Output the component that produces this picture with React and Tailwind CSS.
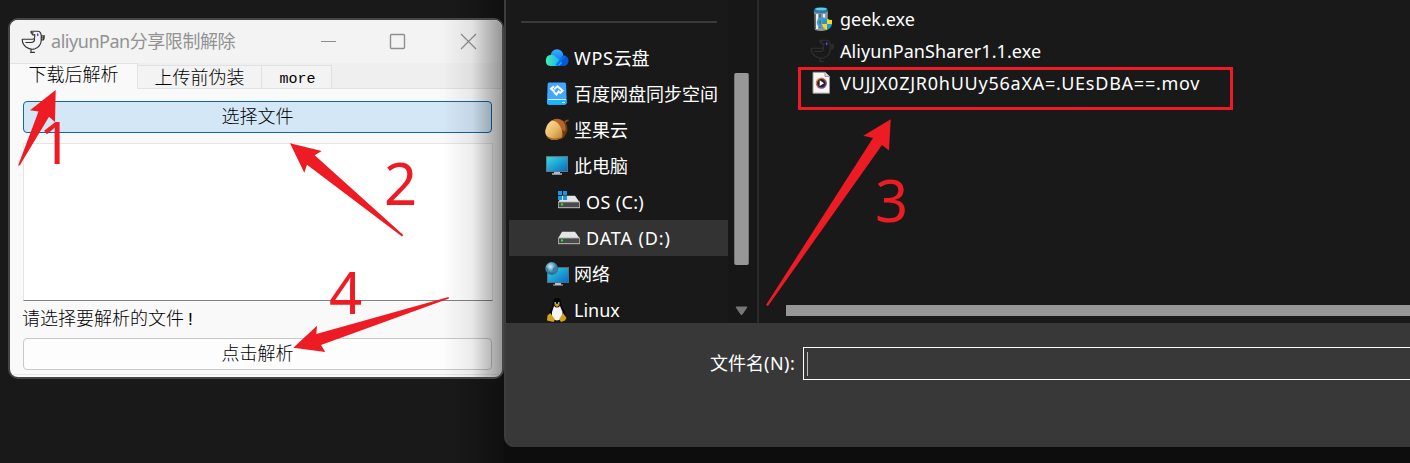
import React from "react";

const ui = "font-['Noto_Sans','Noto_Sans_CJK_SC',sans-serif]";
const song = "font-['Liberation_Mono','Noto_Sans_CJK_SC',monospace] font-light";

function Bird({ stroke, width = 24, height = 24 }) {
  return (
    <svg width={width} height={height} viewBox="0 0 24 24" fill="none" stroke={stroke} strokeWidth="1.15" strokeLinejoin="round" strokeLinecap="round">
      <path d="M13.7 4.6V7.2Q13.5 9.2 11.5 9.2H1.2Q1.2 14 5 17Q9.5 20.3 14 18.8Q20 16.2 20.2 10.5V5.5Q20 1.3 16.5 1.2H10V2.8H12.2M10.5 2.8L11.5 4.8H14M4.8 12.5H10Q13.6 12.2 13.6 9M20.3 5.8H23.5L22.5 7.8H20.5M20.5 9.8H22.5L23.3 7.8M10 19.5V22.3M9.5 22.3H13.5" />
      <path d="M16.7 4V5.4" stroke="#7041f0" strokeWidth="1.6" />
    </svg>
  );
}

function Cloud() {
  return (
    <svg width="24" height="24" viewBox="0 0 24 24">
      <defs>
        <linearGradient id="wa"><stop stopColor="#42efae" /><stop offset="1" stopColor="#14a8fa" /></linearGradient>
        <linearGradient id="wb" x2="0" y2="1"><stop stopColor="#41adff" /><stop offset="1" stopColor="#0878f4" /></linearGradient>
      </defs>
      <circle cx="12" cy="9.5" r="6.2" fill="url(#wb)" />
      <path d="M11 20L18 9.2Q23.5 9.8 23.5 14.7Q23.2 20 18 20Z" fill="#0757d9" />
      <path d="M6.3 8.7Q9.2 8.7 12.3 12L17.2 16.7Q15 20 11 20H6Q.8 20 .8 14.5Q1 9 6.3 8.7Z" fill="url(#wa)" />
      <path d="M10.6 18.8L17 11.1Q19 9.2 21 9.8L12.7 19.7Z" fill="#0872ee" />
    </svg>
  );
}

function Baidu() {
  return (
    <svg width="24" height="24" viewBox="0 0 24 24">
      <path d="M4 .5H19.5Q21 .5 21.1 2.5L21.7 20Q21.5 22.8 19.5 22.8H4Q2 22.8 2 20.5L2.6 2.5Q2.7 .5 4 .5Z" fill="#42a5ff" />
      <path d="M2 17.5H21.7V21Q21.5 22.8 19.5 22.8H4Q2 22.8 2 20.5Z" fill="#1db4fc" />
      <path d="M3 17.5H21" stroke="#d9f2ff" strokeWidth="1" />
      <path d="M17 20.5H20" stroke="white" strokeWidth="1" />
      <path d="M9.6 9.8L6 6.8L9 4.2M9.2 7.2L12.5 4.3L15 6.4M14 5.5L17.6 8.8L14.5 11.4M14.2 8.6L11.5 12.4L8.8 10" fill="none" stroke="white" strokeWidth="2" />
    </svg>
  );
}

function Acorn() {
  return (
    <svg width="24" height="24" viewBox="0 0 24 24">
      <defs><linearGradient id="nut" x2="1" y2="1"><stop stopColor="#ffe0a0" /><stop offset=".55" stopColor="#e8b865" /><stop offset="1" stopColor="#b87829" /></linearGradient></defs>
      <path d="M18.5 5Q19.5 1.5 23.5 1.5V3.2Q20.5 3.4 20.5 6" fill="#984819" />
      <path d="M6 3.5Q11-1.2 17 2.1Q23.5 6 22.3 13Q20 20 15 21.5Z" fill="#713813" />
      <path d="M8 1.8Q13-1 18.5 3.5Q21.5 8 20 13.5Q13 10 8 1.8" fill="#b46529" />
      <path d="M7 2.2Q12 3 15 8Q18.5 13 17 19.5Q10 24 4 20.5Q-1.2 16 .7 11Q2 5.2 7 2.2Z" fill="url(#nut)" />
      <path d="M1 17Q6 22.3 17.2 19.3Q9 24.5 3 20Z" fill="#a96722" />
    </svg>
  );
}

function Monitor() {
  return (
    <svg width="24" height="24" viewBox="0 0 24 24">
      <defs><linearGradient id="pc" x2="1" y2="1"><stop stopColor="#35dce0" /><stop offset="1" stopColor="#0869c6" /></linearGradient></defs>
      <rect x="1" y="2" width="22" height="16" fill="#65747c" />
      <rect x="1.8" y="3.2" width="20.4" height="13.8" fill="url(#pc)" />
      <path d="M9 18H15V19.2H17V20.7H7V19.2H9Z" fill="#aebbc2" />
    </svg>
  );
}

function Drive({ windows }) {
  return (
    <svg width="24" height="24" viewBox="0 0 24 24">
      <path d="M5 5.7H18L22.8 12.5H1Z" fill="#e5e5e5" />
      <rect x="1" y="11.6" width="22" height="6.6" fill="#b0b0b0" />
      <rect x="1.8" y="12.4" width="20.4" height="4.7" fill="#4b4b4b" />
      <rect x="4" y="13.4" width="2" height="2" fill="#24ef32" />
      {windows && <path d="M1 1H5V5H1ZM6 1H10V5H6ZM1 6H5V10H1ZM6 6H10V10H6Z" fill="#1597e5" />}
    </svg>
  );
}

function Network() {
  return (
    <svg width="24" height="24" viewBox="0 0 24 24">
      <defs>
        <linearGradient id="netScreen" x2="1" y2="1"><stop stopColor="#33d4dc" /><stop offset="1" stopColor="#0a6dc8" /></linearGradient>
        <radialGradient id="globe" cx=".4" cy=".35"><stop stopColor="#d5eef8" /><stop offset=".55" stopColor="#6cacca" /><stop offset="1" stopColor="#2c7099" /></radialGradient>
      </defs>
      <rect x="2" y="5" width="22" height="16" fill="#526b78" />
      <rect x="2.8" y="6" width="20.4" height="14.2" fill="url(#netScreen)" />
      <path d="M10 21H16V22.4H18V23.6H8V22.4H10Z" fill="#b7c2c7" />
      <circle cx="6.7" cy="6.5" r="6.4" fill="url(#globe)" />
      <path d="M8 6L11 4.5L12.2 8L9 11.5L7.4 9ZM1 5L3.5 7L3 10Q.6 8 1 5Z" fill="#3d80a6" />
    </svg>
  );
}

function Penguin() {
  return (
    <svg width="24" height="26" viewBox="0 0 24 26">
      <path d="M8 5Q8 1 12 1Q16 1 16 6Q16 9 19 13Q22 19 18 22H6Q2 18 5 14Q8 10 8 5Z" fill="#050505" />
      <path d="M9 9Q12 12 15 9L17.5 15Q18 23 12 23.5Q6 23 7 15Z" fill="#f5f5f5" />
      <path d="M9.5 5H11V7H9.5ZM13 5H14.5V7H13Z" fill="#a2a2a2" />
      <path d="M9 7.7L12 6.5L15 7.7L12 10ZM5.2 16L10 22.5L8.5 25L2 23.5L2.5 18.5ZM18 16L21.5 21L20 23.5L16 25L14.2 22Z" fill="#d6a318" />
    </svg>
  );
}

function Geek() {
  return (
    <svg width="24" height="26" viewBox="0 0 24 26">
      <path d="M4 6H18L17 24Q11 26 5 24Z" fill="#8c959a" />
      <path d="M7 8V23M14 8V12" stroke="#e7edf0" strokeWidth="2.2" />
      <path d="M5 8V23M10 8V22" stroke="#4a5054" strokeWidth="1.3" />
      <path d="M5 2Q11 .5 17 2L18 6Q11 8.5 3.5 6Z" fill="#277fa8" />
      <ellipse cx="11" cy="3" rx="5.5" ry="1.3" fill="#66c7e8" />
      <path d="M15 13Q9 11 8 16Q8 21 14 20" fill="none" stroke="#389fd0" strokeWidth="2.5" />
      <path d="M17 12.5V18H12Q12 15 12.5 13.5Q15 13.5 17 12.5Z" fill="#169be1" />
      <path d="M17 12.5Q19 14 22 14V18H17Z" fill="#ffd41a" />
      <path d="M12 18H17V24Q12.5 22 12 18Z" fill="#ffd41a" />
      <path d="M17 18H22Q21.5 22 17 24Z" fill="#169be1" />
    </svg>
  );
}

function Video() {
  return (
    <svg width="24" height="26" viewBox="0 0 24 26">
      <defs><linearGradient id="play" x2="1" y2="1"><stop stopColor="#ff8c36" /><stop offset="1" stopColor="#6634a0" /></linearGradient></defs>
      <path d="M3 2.3H15L19.5 6.5V23.2H3Z" fill="#f7f7f7" stroke="#9b9b96" />
      <path d="M15 2.3V6.5H19.5" fill="#ddd" stroke="#9b9b96" />
      <circle cx="11.3" cy="13.2" r="4.9" fill="#202530" stroke="url(#play)" strokeWidth="1.4" />
      <path d="M9.7 10.3L14 13.2L9.7 16Z" fill="white" />
    </svg>
  );
}

function NavRow({ icon, text, nested, active, spacing = "" }) {
  return (
    <div className={`flex h-9 w-[219px] shrink-0 items-center gap-[5px] ${nested ? "pl-12" : "pl-9"} ${active ? "bg-[#333333]" : ""}`}>
      <span className="flex w-6 shrink-0 justify-center">{icon}</span>
      <span className={`whitespace-nowrap ${spacing}`}>{text}</span>
    </div>
  );
}

function FileRow({ icon, text, spacing }) {
  return (
    <div className="flex h-8 items-center gap-[6px]">
      <span className="flex w-6 shrink-0 justify-center">{icon}</span>
      <span className={`whitespace-nowrap ${spacing}`}>{text}</span>
    </div>
  );
}

function ToolWindow() {
  return (
    <section className="relative flex h-[361px] w-[496px] flex-col overflow-hidden rounded-[10px] border-2 border-[#454545] bg-[#f9f9f9] text-black">
      <header className="flex h-[43px] shrink-0 items-center bg-[#f3f3f3] pl-[11px] text-[#929292]">
        <Bird stroke="#343434" />
        <h1 className={`${ui} ml-[6px] w-[190px] text-[18px] whitespace-nowrap tracking-[-0.46px]`}>aliyunPan分享限制解除</h1>
        <svg className="ml-[79px]" width="160" height="20" viewBox="0 0 160 20" fill="none" stroke="#8e8e8e" strokeWidth="1.2">
          <path d="M1 9.5H16M141 2L156 17M156 2L141 17" />
          <rect x="70.5" y="2.5" width="14" height="14" rx="1" strokeWidth="1.4" />
        </svg>
      </header>
      <nav className={`${song} flex h-[26px] shrink-0 items-end bg-[#efefef] text-[18px]`}>
        <div className="flex h-[26px] w-[128px] items-center justify-center border-t border-r border-[#e2e2e2] bg-[#f9f9f9]">下载后解析</div>
        <div className="flex h-6 w-[124px] items-center justify-center border-t border-r border-b border-[#e1e1e1] bg-[#f3f3f3] pt-1">上传前伪装</div>
        <div className="flex h-6 w-[70px] items-center justify-center border-t border-r border-b border-[#e1e1e1] bg-[#f3f3f3] pt-[6px] pl-[2px] text-[15px] font-normal">more</div>
        <div className="flex-1 self-stretch border-b border-[#e1e1e1]" />
      </nav>
      <main className={`${song} flex grow flex-col pt-3 pr-3 pl-[13px] text-[18px]`}>
        <button className="flex h-8 w-[469px] shrink-0 items-center justify-center rounded-[4px] border border-[#1065ab] bg-[#d4e7f7] pt-[2px]">选择文件</button>
        <div className="mt-[10px] h-[158px] w-[470px] shrink-0 border border-[#e5e5e5] border-b-[#828282] bg-white" />
        <p className="-ml-px flex h-[37px] items-center pt-[2px]">请选择要解析的文件<span className="pl-px">!</span></p>
        <button className="flex h-8 w-[469px] shrink-0 items-center justify-center rounded-[4px] border border-[#c8c8c8] bg-[#fdfdfd] pt-[2px]">点击解析</button>
        <div className="-mx-[13px] mt-[4px] h-px bg-[#e6e6e6]" />
      </main>
      <div className="pointer-events-none absolute inset-y-0 right-0 w-[60px] bg-linear-to-r from-transparent via-black/7 to-black/38" />
    </section>
  );
}

function FileDialog() {
  return (
    <section className={`${ui} flex h-[447px] w-[906px] shrink-0 flex-col overflow-hidden rounded-bl-[10px] border-l-2 border-[#3d3d3d] bg-[#383838] text-[18px] text-white`}>
      <div className="flex h-[323px] shrink-0 overflow-hidden bg-[#191919]">
        <aside className="flex h-[323px] w-[222px] shrink-0 flex-col overflow-hidden pl-[3px]">
          <div className="mt-[21px] mb-[17px] ml-3 h-[2px] w-[196px] shrink-0 bg-[#3a3a3a]" />
          <NavRow icon={<Cloud />} text={<><span className="tracking-[0.7px]">WPS</span>云盘</>} />
          <NavRow icon={<Baidu />} text="百度网盘同步空间" />
          <NavRow icon={<Acorn />} text="坚果云" />
          <NavRow icon={<Monitor />} text="此电脑" />
          <NavRow icon={<Drive windows />} text="OS (C:)" nested spacing="tracking-[0.35px]" />
          <NavRow icon={<Drive />} text="DATA (D:)" nested active spacing="tracking-[0.9px]" />
          <NavRow icon={<Network />} text="网络" />
          <NavRow icon={<Penguin />} text="Linux" />
        </aside>
        <div className="flex w-[29px] shrink-0 flex-col items-center bg-[#171717] pt-[73px] pr-[2px]">
          <div className="h-[192px] w-[15px] rounded-[2px] border-x border-[#777] bg-[#979797]" />
          <svg className="mt-[41px]" width="13" height="10" viewBox="0 0 13 10"><path d="M1 1H12L7 8.5H6Z" fill="#777" stroke="#777" strokeLinejoin="round" /></svg>
        </div>
        <div className="w-[2px] shrink-0 bg-[#2a2a2a]" />
        <div className="flex grow flex-col pt-[3px]">
          <div className="pl-[51px]">
            <FileRow icon={<Geek />} text="geek.exe" spacing="tracking-[0px]" />
            <FileRow icon={<Bird stroke="#303033" />} text="AliyunPanSharer1.1.exe" spacing="tracking-[0.08px]" />
            <FileRow icon={<Video />} text="VUJJX0ZJR0hUUy56aXA=.UEsDBA==.mov" spacing="tracking-[0.75px]" />
          </div>
          <div className="mt-auto mb-[7px] ml-[27px] h-[11px] bg-[#979797]" />
        </div>
      </div>
      <footer className="flex h-[124px] items-start pt-6 pl-[204px]">
        <label className="flex h-[33px] w-[93px] items-center whitespace-nowrap">文件名<span className="tracking-[0.5px]">(N):</span></label>
        <div className="flex h-[33px] grow items-center border border-r-0 border-white pl-[3px]"><span className="h-6 w-px bg-[#bdbdbd]" /></div>
      </footer>
    </section>
  );
}

export default function App() {
  return (
    <div className="relative flex h-[463px] w-[1410px] items-start overflow-hidden bg-[#181818]">
      <div className="h-[463px] w-[504px] shrink-0 bg-linear-to-r from-[#191919] from-90% to-[#101010] pt-[18px] pl-2">
        <ToolWindow />
      </div>
      <div className="h-[463px] w-[906px] bg-[#0d0d0d]">
        <FileDialog />
      </div>
      <svg className={`${ui} pointer-events-none absolute inset-0`} width="1410" height="463" viewBox="0 0 1410 463" fill="#ed1c24">
        <path d="M55.7 90L30 110.3L38.5 111.5L18 165.7L20 165L49 116.7L55 122Z" />
        <path d="M290 143.3L321.7 151L314.7 155.3L403.3 235L402 236.5L307 164.7L304.3 172.7Z" />
        <path d="M890.7 119.3L863.3 135.7L873 138L766 305L768 306L882 145L889 150.5Z" />
        <path d="M293.3 347.7L317 325.7L316.3 334L448.5 297L449 298.5L321 345L325.3 352Z" />
        <rect x="799.5" y="68.5" width="432" height="40" fill="none" stroke="#ed1c24" strokeWidth="3" />
        <g fontSize="58">
          <text x="39" y="164">1</text>
          <text x="384" y="205">2</text>
          <text x="875" y="222">3</text>
          <text x="329" y="314">4</text>
        </g>
      </svg>
    </div>
  );
}
